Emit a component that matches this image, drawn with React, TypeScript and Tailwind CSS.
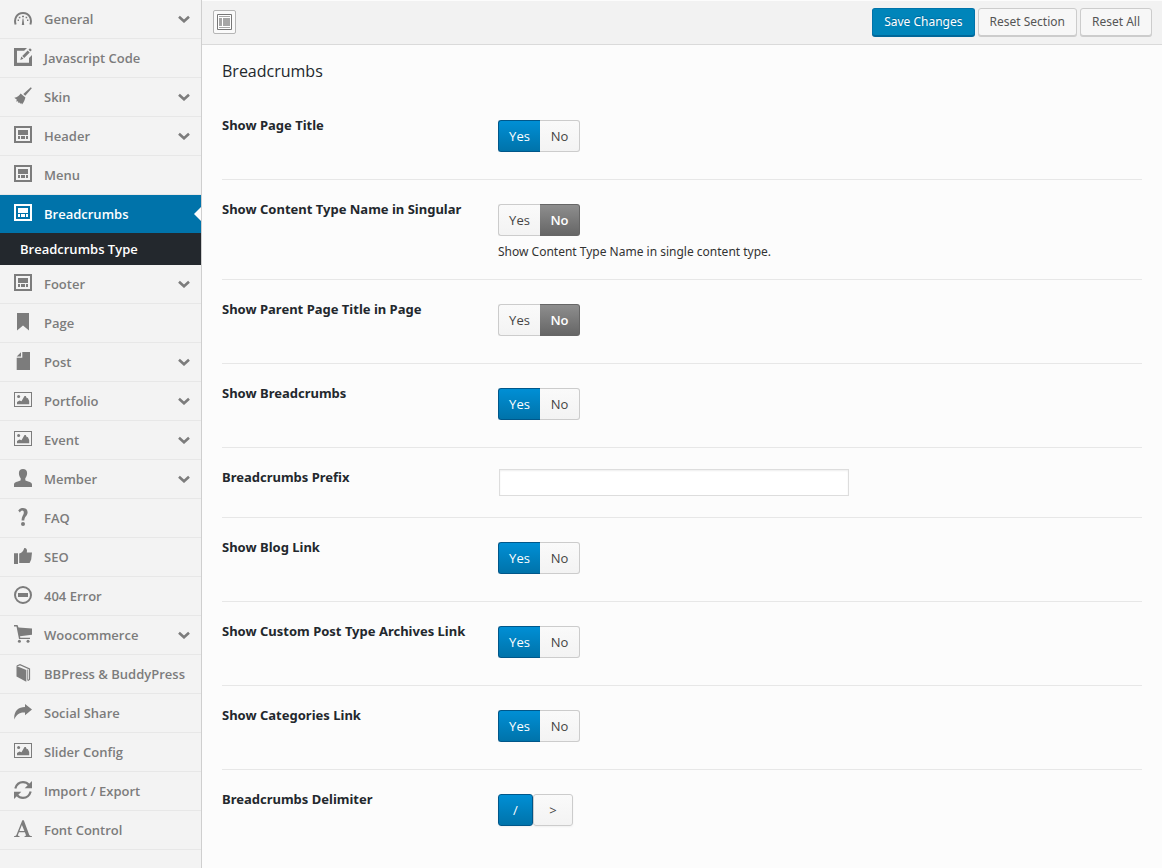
import { useState } from "react";
import type { ReactNode } from "react";

const frameIcon = (
  <>
    <path fillRule="evenodd" d="M0 0h18v17H0zM2 2v13h14V2z" />
    <path d="M4 4h10v5H4zM4 10h2v3H4zM7 10h4v3H7zM12 10h2v3h-2z" />
  </>
);

const imageIcon = (
  <>
    <path fillRule="evenodd" d="M0 1h18v15H0zM1 2v13h16V2z" />
    <circle cx="4.600" cy="5.500" r="1.500" />
    <path d="M3 13.200V11l2.500-1.500 2 .8 3-5.300h1.300l1 2.200 1-.3L15.200 10v3.200z" />
  </>
);

const icons: Record<string, ReactNode> = {
  dashboard: (
    <>
      <path d="M1.600 15.500C-.3 9.500 3 4 9 4s9.300 5.500 7.400 11.500" fill="none" stroke="currentColor" strokeWidth="2" />
      <path d="M8.600 9.500h.8l.8 6.500H7.800zM8 6.700h2v1.600H8zM4.800 7.700h1.600v1.600H4.800zM11.600 7.700h1.600v1.600h-1.600zM3.600 10.500H5V12H3.600zM13 10.500h1.400V12H13z" />
    </>
  ),
  edit: (
    <>
      <path d="M0 0h13l-2.800 2.800H3v12h12V10l3-3v11H0z" />
      <path d="M16 .2l1.800 1.800-1.500 1.500-1.800-1.800zM13.700 2.400l2 2-5.500 5.500-2-2zM7.300 8.500l2.200 2.200L6.300 12z" />
    </>
  ),
  broom: (
    <>
      <path d="M16.800.2l1 1-6.500 7.500-2-1.800z" />
      <path d="M.3 10.800c3-.3 5-2 6.300-4.200l4.800 3.900C10.800 13 10 15 8 17.600l-.8-1.600-1 .8-.7-1.400-1.400.3v-1.500l-2 .3.800-1.700z" />
    </>
  ),
  frame: frameIcon,
  bookmark: <path d="M3 0h12v17.500l-6-5-6 5z" />,
  file: <path d="M8.300 0H16v18H2.700V5.700h5.600zM7 .2v4.200H2.700z" />,
  image: imageIcon,
  user: (
    <path d="M9 0c2.500 0 4.100 1.300 4.100 4 0 2.400-.8 4-1.800 5.200v2c1.500 1.300 6.700 1.300 6.700 4.300V18H0v-2.500c0-3 5.200-3 6.700-4.300v-2C5.700 8 4.900 6.400 4.900 4c0-2.700 1.600-4 4.100-4z" />
  ),
  question: (
    <>
      <path d="M4.200 2.600C5.400.8 7 0 9 0c2.800 0 4.600 1.600 4.600 4.200 0 3.700-3.300 4.100-3.300 8.400H7.600c0-4.600 2.200-5.600 2.200-8.200 0-1.200-.6-1.900-1.600-1.900-.9 0-1.600.7-2.300 2z" />
      <circle cx="9" cy="16" r="2" />
    </>
  ),
  thumb: (
    <path d="M0 6.200h4V17H0zM5.200 6.600c2-.3 4.200-2 5.100-5.600 2-.2 3.300 1.300 2.500 4.600H18L17.200 12.500 15.600 16H5.200z" />
  ),
  minus: (
    <>
      <circle cx="9" cy="9" r="8" fill="none" stroke="currentColor" strokeWidth="2" />
      <path d="M4 7h10v4H4z" />
    </>
  ),
  cart: (
    <>
      <path d="M0 0h3.500l1 2.500L18 3.600v6.200L6 11.200l.3 1.500H16V14H5L2.500 1.500H0z" />
      <circle cx="5.400" cy="16.200" r="1.500" />
      <circle cx="14" cy="16.200" r="1.500" />
    </>
  ),
  book: (
    <>
      <path d="M2.500 2L12.300 6v11.800L2.500 12.500z" />
      <path d="M2.800 2L6 .7 15.500 5v10.500L14 16.500" fill="none" stroke="currentColor" strokeWidth="1.200" />
      <path d="M13.300 5.500h.8v11h-.8z" />
    </>
  ),
  share: <path d="M11 1l7 5.600-7 5.700V9.500C6 9 2.500 11 .3 16.500-.5 8.500 4 4.100 11 4z" />,
  refresh: (
    <>
      <path d="M1.300 7.500C2.500 3.500 5.500 1.200 9 1.200c2.500 0 4.500 1 5.800 2.600M16.700 10.500c-1.200 4-4.200 6.300-7.700 6.300-2.500 0-4.500-1-5.800-2.600" fill="none" stroke="currentColor" strokeWidth="2.200" />
      <path d="M18 0v7.300h-7.300zM0 18v-7.300h7.300z" />
    </>
  ),
  font: (
    <path fillRule="evenodd" d="M8.300.3h1.500l5.400 14.500c.3.900 1.100 1.300 2.800 1.400v.9h-7.500v-.9c1.400 0 1.600-.5 1.300-1.400l-.9-2.600H5l-.9 2.400c-.4 1 .1 1.600 1.500 1.600v.9H0v-.9c1.500-.1 2.200-.6 2.600-1.600zM7.900 5L5.500 11h4.900z" />
  ),
};

function Icon({ name }: { name: string }) {
  return (
    <svg viewBox="0 0 18 18" className="mb-1 size-[18px] shrink-0" fill="currentColor" aria-hidden="true">
      {icons[name]}
    </svg>
  );
}

type Item = { label: string; icon: string; expandable?: boolean; child?: string };

const items: Item[] = [
  { label: "General", icon: "dashboard", expandable: true },
  { label: "Javascript Code", icon: "edit" },
  { label: "Skin", icon: "broom", expandable: true },
  { label: "Header", icon: "frame", expandable: true },
  { label: "Menu", icon: "frame" },
  { label: "Breadcrumbs", icon: "frame", child: "Breadcrumbs Type" },
  { label: "Footer", icon: "frame", expandable: true },
  { label: "Page", icon: "bookmark" },
  { label: "Post", icon: "file", expandable: true },
  { label: "Portfolio", icon: "image", expandable: true },
  { label: "Event", icon: "image", expandable: true },
  { label: "Member", icon: "user", expandable: true },
  { label: "FAQ", icon: "question" },
  { label: "SEO", icon: "thumb" },
  { label: "404 Error", icon: "minus" },
  { label: "Woocommerce", icon: "cart", expandable: true },
  { label: "BBPress & BuddyPress", icon: "book" },
  { label: "Social Share", icon: "share" },
  { label: "Slider Config", icon: "image" },
  { label: "Import / Export", icon: "refresh" },
  { label: "Font Control", icon: "font" },
];

function Sidebar() {
  return (
    <nav className="w-[202px] shrink-0 border-r border-[#cfcfcf] bg-[#f3f3f3] text-[13px] font-semibold text-[#7c7c7c]">
      <ul>
        {items.map((item) =>
          item.child ? (
            <li key={item.label}>
              <a href="#" className="relative flex h-[38px] items-center gap-3 bg-[#0073aa] pt-[2px] pl-[14px] text-white">
                <Icon name={item.icon} />
                {item.label}
                <span className="absolute top-1/2 right-0 -translate-y-1/2 border-y-7 border-r-7 border-y-transparent border-r-[#fcfcfc]" />
              </a>
              <a href="#" className="flex h-8 items-center bg-[#23282d] pt-[2px] pl-5 text-white">
                {item.child}
              </a>
            </li>
          ) : (
            <li key={item.label} className="border-b border-[#e7e7e7]">
              <a href="#" className="flex h-[38px] items-center gap-3 pt-[2px] pr-[11px] pl-[14px] whitespace-nowrap">
                <Icon name={item.icon} />
                {item.label}
                {item.expandable && (
                  <svg viewBox="0 0 12 8" className="mb-[2px] ml-auto h-2 w-3" fill="none" stroke="currentColor" strokeWidth="2.600" aria-hidden="true">
                    <path d="M1 1.800l5 4.500 5-4.500" />
                  </svg>
                )}
              </a>
            </li>
          ),
        )}
      </ul>
    </nav>
  );
}

function Toolbar() {
  return (
    <header className="flex h-[45px] items-center justify-between border-t border-b border-t-[#fcfcfc] border-b-[#dadada] bg-[#f2f2f2] pr-[10px] pb-[2px] pl-[11px] text-[12px] text-[#555]">
      <button type="button" aria-label="Expand options" className="flex h-6 w-[23px] items-center justify-center rounded-[2px] border border-[#b5b5b5] bg-[#fafafa]">
        <svg viewBox="0 0 15 16" className="h-4 w-[15px]" aria-hidden="true">
          <path d="M.5.5h14v15H.5z" fill="#fff" stroke="#777" />
          <path d="M2 2h11v1H2zM2 4h3v8H2zM6 4h7v8H6zM2 13h11v1H2z" fill="#a6a6a6" />
        </svg>
      </button>
      <div className="flex gap-[3px] font-['Noto_Sans',sans-serif]">
        <button type="button" className="h-[28px] rounded-[3px] border border-[#0073aa] border-b-[#006799] bg-[#0085ba] px-[11px] pt-px text-white shadow-[0_1px_0_#006799] [text-shadow:0_-1px_1px_#006799]">
          Save Changes
        </button>
        <button type="button" className="h-[28px] rounded-[3px] border border-[#ccc] bg-[#f7f7f7] px-[11px] pt-px shadow-[0_1px_0_#ccc]">
          Reset Section
        </button>
        <button type="button" className="h-[28px] rounded-[3px] border border-[#ccc] bg-[#f7f7f7] px-[11px] pt-px shadow-[0_1px_0_#ccc]">
          Reset All
        </button>
      </div>
    </header>
  );
}

const idle = "border-[#ccc] bg-linear-to-b from-[#fafafa] to-[#f3f3f3] text-[#444]";
const blue = "border-[#00578a] bg-linear-to-b from-[#008fd5] to-[#0073aa] font-medium text-white";
const gray = "border-[#666] bg-linear-to-b from-[#8e8e8e] to-[#666] font-semibold text-white";

function Switch({ label, initial }: { label: string; initial: boolean }) {
  const [on, setOn] = useState(initial);
  return (
    <div role="group" aria-label={label} className="flex h-8 text-[13px]">
      <button type="button" aria-pressed={on} onClick={() => setOn(true)} className={`w-[42px] rounded-l-[3px] border border-r-0 pt-[2px] ${on ? blue : idle}`}>
        Yes
      </button>
      <button type="button" aria-pressed={!on} onClick={() => setOn(false)} className={`w-10 rounded-r-[3px] border border-l-0 pt-[2px] ${on ? idle : gray}`}>
        No
      </button>
    </div>
  );
}

function Delimiter() {
  const [value, setValue] = useState("/");
  return (
    <div role="group" aria-label="Breadcrumbs Delimiter" className="flex h-8 text-[13px]">
      <button type="button" aria-pressed={value === "/"} onClick={() => setValue("/")} className={`w-[35px] rounded-[3px] border pt-[2px] shadow-xs ${value === "/" ? blue : idle}`}>
        /
      </button>
      <button type="button" aria-pressed={value === ">"} onClick={() => setValue(">")} className={`w-10 rounded-[3px] border pt-[2px] shadow-xs ${value === ">" ? blue : idle}`}>
        &gt;
      </button>
    </div>
  );
}

type Field = { label: string; kind: "switch" | "text" | "delimiter"; on?: boolean; note?: string };

const fields: Field[] = [
  { label: "Show Page Title", kind: "switch", on: true },
  { label: "Show Content Type Name in Singular", kind: "switch", on: false, note: "Show Content Type Name in single content type." },
  { label: "Show Parent Page Title in Page", kind: "switch", on: false },
  { label: "Show Breadcrumbs", kind: "switch", on: true },
  { label: "Breadcrumbs Prefix", kind: "text" },
  { label: "Show Blog Link", kind: "switch", on: true },
  { label: "Show Custom Post Type Archives Link", kind: "switch", on: true },
  { label: "Show Categories Link", kind: "switch", on: true },
  { label: "Breadcrumbs Delimiter", kind: "delimiter" },
];

function FieldRow({ field }: { field: Field }) {
  const isText = field.kind === "text";
  return (
    <div className={`flex border-b border-[#e7e7e7] last:border-b-0 ${isText ? "min-h-[70px]" : "min-h-[84px]"}`}>
      <div className="w-[276px] shrink-0 pt-[19px] font-['Noto_Sans',sans-serif] text-[13px] leading-5 font-bold text-[#23282d]">
        {isText ? <label htmlFor="prefix">{field.label}</label> : field.label}
      </div>
      <div className={isText ? "grow pt-[21px] pl-px" : "grow pt-6 pb-[17px]"}>
        {field.kind === "switch" && <Switch label={field.label} initial={!!field.on} />}
        {field.kind === "delimiter" && <Delimiter />}
        {isText && (
          <input id="prefix" type="text" className="block h-[27px] w-full max-w-[350px] border border-[#ddd] bg-white px-1 text-[13px] shadow-[inset_0_1px_2px_rgba(0,0,0,0.07)]" />
        )}
        {field.note && <p className="mt-[6px] font-['Noto_Sans',sans-serif] text-[12px] leading-5 text-[#333]">{field.note}</p>}
      </div>
    </div>
  );
}

export default function App() {
  return (
    <div className="flex min-h-screen bg-[#fcfcfc] font-['Open_Sans','Noto_Sans',sans-serif]">
      <Sidebar />
      <div className="min-w-0 grow">
        <Toolbar />
        <main className="px-5 pt-[14px]">
          <h1 className="h-[37px] text-[16px] leading-6 text-[#23282d]">Breadcrumbs</h1>
          {fields.map((field) => (
            <FieldRow key={field.label} field={field} />
          ))}
        </main>
      </div>
    </div>
  );
}
